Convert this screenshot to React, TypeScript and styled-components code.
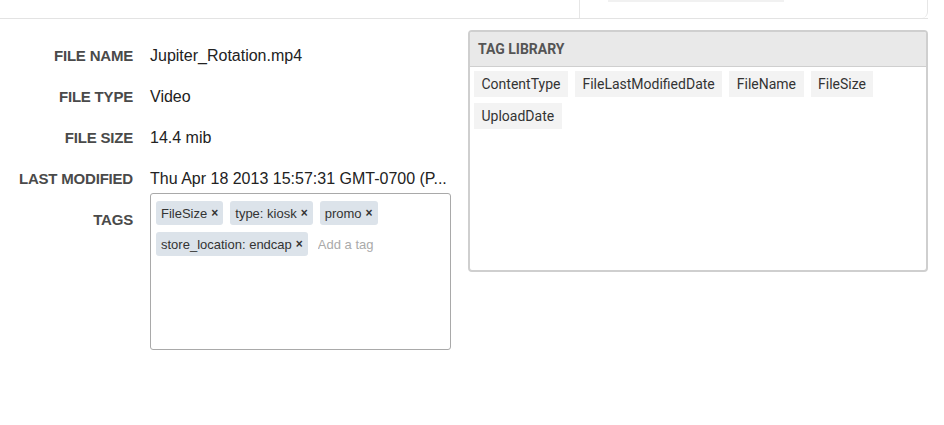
import React, { useState } from 'react';
import styled, { createGlobalStyle } from 'styled-components';

const GlobalStyle = createGlobalStyle`
  html, body {
    margin: 0;
    padding: 0;
    background: #fff;
  }
  body {
    font-family: "Liberation Sans", Arial, sans-serif;
    color: #222;
  }
`;

const fileInfo = [
  { label: 'File Name', value: 'Jupiter_Rotation.mp4' },
  { label: 'File Type', value: 'Video' },
  { label: 'File Size', value: '14.4 mib' },
  { label: 'Last Modified', value: 'Thu Apr 18 2013 15:57:31 GMT-0700 (P...' },
];

const libraryTags = ['ContentType', 'FileLastModifiedDate', 'FileName', 'FileSize', 'UploadDate'];

function App() {
  const [tags, setTags] = useState(['FileSize', 'type: kiosk', 'promo', 'store_location: endcap']);
  const [draft, setDraft] = useState('');

  const removeTag = (tag: string) => setTags(tags.filter((t) => t !== tag));

  const onKeyDown = (e: React.KeyboardEvent<HTMLInputElement>) => {
    if (e.key === 'Enter' && draft.trim()) {
      setTags([...tags, draft.trim()]);
      setDraft('');
    }
  };

  return (
    <>
      <GlobalStyle />
      <TopBar>
        <TopCard>
          <TopCardBar />
        </TopCard>
      </TopBar>
      <Main>
        <InfoList>
          {fileInfo.map((item, i) => (
            <Row key={item.label} $last={i === fileInfo.length - 1}>
              <Label>{item.label}</Label>
              <Value>{item.value}</Value>
            </Row>
          ))}
          <Row>
            <Label $offset>Tags</Label>
            <TagBox>
              {tags.map((tag) => (
                <Chip key={tag}>
                  {tag}
                  <Remove type="button" aria-label={`Remove ${tag}`} onClick={() => removeTag(tag)}>
                    ×
                  </Remove>
                </Chip>
              ))}
              <TagInput
                placeholder="Add a tag"
                value={draft}
                onChange={(e) => setDraft(e.target.value)}
                onKeyDown={onKeyDown}
              />
            </TagBox>
          </Row>
        </InfoList>
        <Library>
          <LibraryHeader>Tag Library</LibraryHeader>
          <LibraryBody>
            {libraryTags.map((tag) => (
              <LibraryTag key={tag}>{tag}</LibraryTag>
            ))}
          </LibraryBody>
        </Library>
      </Main>
    </>
  );
}

export default App;

const TopBar = styled.div`
  display: flex;
  justify-content: flex-end;
  width: 928px;
  height: 18px;
  border-bottom: 1px solid #e3e3e3;
`;

const TopCard = styled.div`
  width: 349px;
  height: 18px;
  border-left: 1px solid #e6e6e6;
  border-right: 1px solid #e6e6e6;
  border-bottom-right-radius: 6px;
  padding-left: 28px;
  box-sizing: border-box;
`;

const TopCardBar = styled.div`
  width: 176px;
  height: 2px;
  background: #f1f1f1;
`;

const Main = styled.div`
  display: flex;
  align-items: flex-start;
  gap: 17px;
  margin-top: 11px;
`;

const InfoList = styled.div`
  display: flex;
  flex-direction: column;
  width: 451px;
  padding-top: 16px;
`;

const Row = styled.div<{ $last?: boolean }>`
  display: grid;
  grid-template-columns: 133px 301px;
  column-gap: 17px;
  align-items: start;
  margin-bottom: ${(props) => (props.$last ? '4px' : '21px')};
`;

const Label = styled.div<{ $offset?: boolean }>`
  text-align: right;
  font-family: "Liberation Sans", Arial, sans-serif;
  font-size: 15px;
  font-weight: 700;
  line-height: 20px;
  letter-spacing: -0.2px;
  color: #4a4a4a;
  text-transform: uppercase;
  padding-top: ${(props) => (props.$offset ? '17px' : '0')};
`;

const Value = styled.div`
  font-size: 16px;
  line-height: 20px;
  color: #222;
  white-space: nowrap;
`;

const TagBox = styled.div`
  display: flex;
  flex-wrap: wrap;
  align-content: flex-start;
  gap: 7px 7px;
  width: 301px;
  height: 157px;
  box-sizing: border-box;
  padding: 7px 5px;
  border: 1px solid #a9a9a9;
  border-radius: 3px;
`;

const Chip = styled.span`
  display: inline-flex;
  align-items: center;
  height: 24px;
  padding: 0 5px;
  border-radius: 3px;
  background: #dce3ea;
  font-size: 13px;
  color: #333;
`;

const Remove = styled.button`
  border: none;
  background: none;
  padding: 0 0 0 4px;
  font-family: "Liberation Sans", Arial, sans-serif;
  font-size: 12px;
  font-weight: 700;
  line-height: 1;
  color: #333;
  cursor: pointer;
`;

const TagInput = styled.input`
  border: none;
  outline: none;
  height: 24px;
  width: 110px;
  padding: 0 0 0 3px;
  font-family: "Liberation Sans", Arial, sans-serif;
  font-size: 13px;
  color: #333;

  &::placeholder {
    color: #aaa;
  }
`;

const Library = styled.div`
  width: 460px;
  height: 242px;
  box-sizing: border-box;
  border: 2px solid #cfcfcf;
  border-radius: 4px;
  overflow: hidden;
`;

const LibraryHeader = styled.div`
  height: 34px;
  display: flex;
  align-items: center;
  padding-left: 8px;
  background: #e9e9e9;
  border-bottom: 1px solid #cfcfcf;
  font-family: Roboto, "Liberation Sans", sans-serif;
  font-size: 14px;
  font-weight: 700;
  color: #555;
  text-transform: uppercase;
`;

const LibraryBody = styled.div`
  display: flex;
  flex-wrap: wrap;
  gap: 6px 7px;
  padding: 4px 4px;
`;

const LibraryTag = styled.span`
  display: inline-flex;
  align-items: center;
  height: 26px;
  padding: 0 7.5px;
  background: #f3f3f3;
  font-family: Roboto, "Liberation Sans", sans-serif;
  font-size: 14px;
  color: #333;
`;
